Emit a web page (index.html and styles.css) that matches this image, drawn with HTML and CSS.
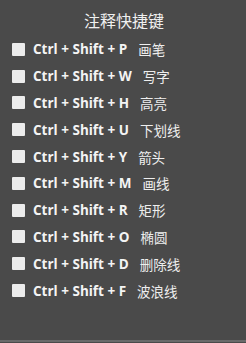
FILE: index.html
```html
<!DOCTYPE html>
<html>
<head>
<meta charset="utf-8">
<link rel="stylesheet" href="styles.css">
</head>
<body>
<div class="panel">
  <div class="title">注释快捷键</div>
  <ul class="list">
    <li class="row"><span class="box"></span><span class="keys">Ctrl + Shift + P</span><span class="label">画笔</span></li>
    <li class="row"><span class="box"></span><span class="keys">Ctrl + Shift + W</span><span class="label">写字</span></li>
    <li class="row"><span class="box"></span><span class="keys">Ctrl + Shift + H</span><span class="label">高亮</span></li>
    <li class="row"><span class="box"></span><span class="keys">Ctrl + Shift + U</span><span class="label">下划线</span></li>
    <li class="row"><span class="box"></span><span class="keys">Ctrl + Shift + Y</span><span class="label">箭头</span></li>
    <li class="row"><span class="box"></span><span class="keys">Ctrl + Shift + M</span><span class="label">画线</span></li>
    <li class="row"><span class="box"></span><span class="keys">Ctrl + Shift + R</span><span class="label">矩形</span></li>
    <li class="row"><span class="box"></span><span class="keys">Ctrl + Shift + O</span><span class="label">椭圆</span></li>
    <li class="row"><span class="box"></span><span class="keys">Ctrl + Shift + D</span><span class="label">删除线</span></li>
    <li class="row"><span class="box"></span><span class="keys">Ctrl + Shift + F</span><span class="label">波浪线</span></li>
  </ul>
</div>
</body>
</html>
```
FILE: styles.css
```css
html, body {
  margin: 0;
  padding: 0;
  background: #4a4a4a;
}
.panel {
  width: 246px;
  height: 342px;
  box-sizing: border-box;
  background: #4a4a4a;
  border-bottom: 2px solid #6a6a6a;
  padding-top: 9px;
  font-family: "Open Sans", "Noto Sans CJK SC", sans-serif;
  color: #f2f2f2;
}
.title {
  text-align: center;
  font-family: "Noto Sans CJK SC", sans-serif;
  font-size: 16px;
  line-height: 23px;
  color: #f0f0f0;
  padding-left: 2px;
}
.list {
  list-style: none;
  margin: 0;
  padding: 4px 0 0 12px;
}
.row {
  display: flex;
  align-items: center;
  height: 26.8px;
}
.box {
  width: 13px;
  height: 13px;
  background: #ececec;
  border-radius: 1px;
  margin-right: 8px;
  flex: none;
}
.keys {
  font-weight: 700;
  font-size: 13.5px;
  color: #f4f4f4;
}
.label {
  margin-left: 11px;
  font-family: "Noto Sans CJK SC", sans-serif;
  font-size: 13.5px;
  color: #eeeeee;
}
```
